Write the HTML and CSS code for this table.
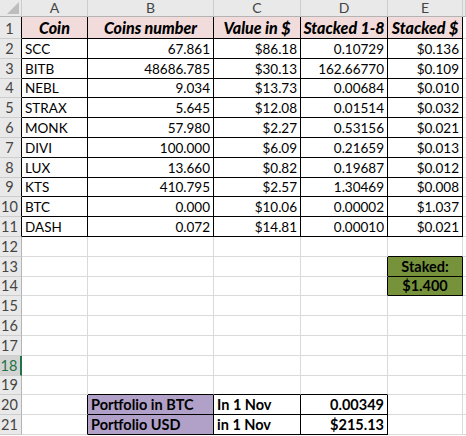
FILE: index.html
```html
<!DOCTYPE html>
<html>
<head>
<meta charset="utf-8">
<link rel="stylesheet" href="styles.css">
</head>
<body>
<div class="sheet">
  <div class="row colhead">
    <div class="c ch corner"><svg width="12" height="12" viewBox="0 0 12 12"><polygon points="12,0 12,12 0,12" fill="#bdbdbd"/></svg></div>
    <div class="c ch">A</div><div class="c ch">B</div><div class="c ch">C</div><div class="c ch">D</div><div class="c ch">E</div><div class="c ch"></div>
  </div>
  <div class="row r1">
    <div class="c rh kr">1</div>
    <div class="c hd k">Coin</div><div class="c hd k">Coins number</div><div class="c hd k">Value in $</div><div class="c hd k">Stacked 1-8</div><div class="c hd k">Stacked $</div><div class="c"></div>
  </div>
  <div class="row"><div class="c rh kr">2</div><div class="c k">SCC</div><div class="c k n">67.861</div><div class="c k n">$86.18</div><div class="c k n">0.10729</div><div class="c k n">$0.136</div><div class="c"></div></div>
  <div class="row"><div class="c rh kr">3</div><div class="c k">BITB</div><div class="c k n">48686.785</div><div class="c k n">$30.13</div><div class="c k n">162.66770</div><div class="c k n">$0.109</div><div class="c"></div></div>
  <div class="row"><div class="c rh kr">4</div><div class="c k">NEBL</div><div class="c k n">9.034</div><div class="c k n">$13.73</div><div class="c k n">0.00684</div><div class="c k n">$0.010</div><div class="c"></div></div>
  <div class="row"><div class="c rh kr">5</div><div class="c k">STRAX</div><div class="c k n">5.645</div><div class="c k n">$12.08</div><div class="c k n">0.01514</div><div class="c k n">$0.032</div><div class="c"></div></div>
  <div class="row"><div class="c rh kr">6</div><div class="c k">MONK</div><div class="c k n">57.980</div><div class="c k n">$2.27</div><div class="c k n">0.53156</div><div class="c k n">$0.021</div><div class="c"></div></div>
  <div class="row"><div class="c rh kr">7</div><div class="c k">DIVI</div><div class="c k n">100.000</div><div class="c k n">$6.09</div><div class="c k n">0.21659</div><div class="c k n">$0.013</div><div class="c"></div></div>
  <div class="row"><div class="c rh kr">8</div><div class="c k">LUX</div><div class="c k n">13.660</div><div class="c k n">$0.82</div><div class="c k n">0.19687</div><div class="c k n">$0.012</div><div class="c"></div></div>
  <div class="row"><div class="c rh kr">9</div><div class="c k">KTS</div><div class="c k n">410.795</div><div class="c k n">$2.57</div><div class="c k n">1.30469</div><div class="c k n">$0.008</div><div class="c"></div></div>
  <div class="row"><div class="c rh kr">10</div><div class="c k">BTC</div><div class="c k n">0.000</div><div class="c k n">$10.06</div><div class="c k n">0.00002</div><div class="c k n">$1.037</div><div class="c"></div></div>
  <div class="row"><div class="c rh kr">11</div><div class="c k">DASH</div><div class="c k n">0.072</div><div class="c k n">$14.81</div><div class="c k n">0.00010</div><div class="c k n">$0.021</div><div class="c"></div></div>
  <div class="row"><div class="c rh">12</div><div class="c"></div><div class="c"></div><div class="c"></div><div class="c"></div><div class="c kb"></div><div class="c"></div></div>
  <div class="row"><div class="c rh">13</div><div class="c"></div><div class="c"></div><div class="c"></div><div class="c kr"></div><div class="c g k">Staked:</div><div class="c"></div></div>
  <div class="row"><div class="c rh">14</div><div class="c"></div><div class="c"></div><div class="c"></div><div class="c kr"></div><div class="c g k">$1.400</div><div class="c"></div></div>
  <div class="row"><div class="c rh">15</div><div class="c"></div><div class="c"></div><div class="c"></div><div class="c"></div><div class="c"></div><div class="c"></div></div>
  <div class="row"><div class="c rh">16</div><div class="c"></div><div class="c"></div><div class="c"></div><div class="c"></div><div class="c"></div><div class="c"></div></div>
  <div class="row"><div class="c rh">17</div><div class="c"></div><div class="c"></div><div class="c"></div><div class="c"></div><div class="c"></div><div class="c"></div></div>
  <div class="row"><div class="c rh sel">18</div><div class="c"></div><div class="c"></div><div class="c"></div><div class="c"></div><div class="c"></div><div class="c"></div></div>
  <div class="row"><div class="c rh">19</div><div class="c"></div><div class="c kb"></div><div class="c kb"></div><div class="c kb"></div><div class="c"></div><div class="c"></div></div>
  <div class="row"><div class="c rh">20</div><div class="c kr"></div><div class="c p k b">Portfolio in BTC</div><div class="c k b">In 1 Nov</div><div class="c k b n">0.00349</div><div class="c"></div><div class="c"></div></div>
  <div class="row"><div class="c rh">21</div><div class="c kr"></div><div class="c p k b">Portfolio USD</div><div class="c k b">in 1 Nov</div><div class="c k b n">$215.13</div><div class="c"></div><div class="c"></div></div>
</div>
</body>
</html>
```

FILE: styles.css
```css
* { box-sizing: border-box; }
html, body { margin: 0; padding: 0; }
body {
  background: #fff;
  font-family: Lato, "Open Sans", sans-serif;
  font-size: 13.5px;
  color: #000;
  width: 466px;
  height: 436px;
  overflow: hidden;
}
.sheet { display: flex; flex-direction: column; }
.row {
  display: grid;
  grid-template-columns: 22px 66px 126px 87px 87px 75px 1fr;
  height: 19.8px;
  flex: none;
}
.row.colhead { height: 17px; }
.row.r1 { height: 22px; }
.c {
  border-right: 1px solid #dadada;
  border-bottom: 1px solid #dadada;
  display: flex;
  align-items: flex-end;
  padding: 0 3px 1px 3px;
  line-height: 16px;
  white-space: nowrap;
  overflow: hidden;
}
.n { justify-content: flex-end; }
.ch {
  background: #e9e9e9;
  color: #444;
  font-size: 14px;
  justify-content: center;
  align-items: center;
  padding: 0;
  border-right-color: #cdcdcd;
  border-bottom-color: #b4b4b4;
}
.corner { justify-content: flex-end; align-items: flex-end; padding: 0 2px 2px 0; }
.rh {
  background: #e9e9e9;
  color: #444;
  font-size: 14.5px;
  justify-content: center;
  padding: 0 2px 1px 0;
  border-right-color: #b4b4b4;
  border-bottom-color: #cdcdcd;
}
.rh.sel {
  background: #d3d3d3;
  color: #217346;
  border-right: 2px solid #217346;
}
.hd {
  background: #f2dcdb;
  font-weight: 900;
  font-style: italic;
  font-size: 16px;
  justify-content: center;
  padding: 0 0 2px 0;
}
.k { border-right-color: #000; border-bottom-color: #000; }
.kb { border-bottom-color: #000; }
.kr { border-right-color: #000; }
.g { background: #76933c; font-weight: bold; font-size: 14.5px; justify-content: center; }
.p { background: #b1a0c7; }
.b { font-weight: bold; font-size: 14.5px; }
```
